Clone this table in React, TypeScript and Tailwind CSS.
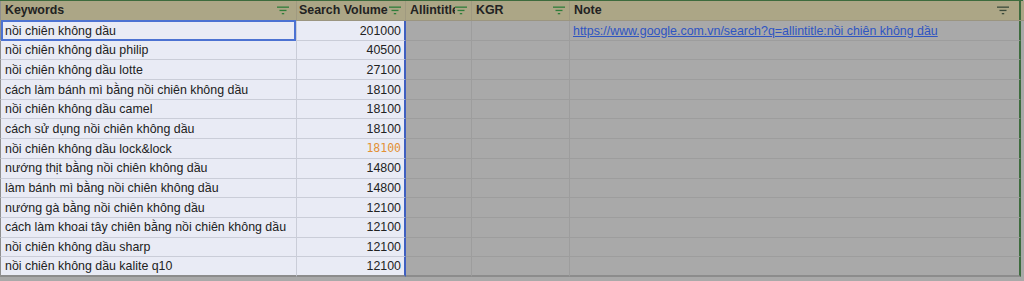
import React from "react";

const rows: [string, string, boolean?][] = [
  ["nồi chiên không dầu", "201000"],
  ["nồi chiên không dầu philip", "40500"],
  ["nồi chiên không dầu lotte", "27100"],
  ["cách làm bánh mì bằng nồi chiên không dầu", "18100"],
  ["nồi chiên không dầu camel", "18100"],
  ["cách sử dụng nồi chiên không dầu", "18100"],
  ["nồi chiên không dầu lock&lock", "18100", true],
  ["nướng thịt bằng nồi chiên không dầu", "14800"],
  ["làm bánh mì bằng nồi chiên không dầu", "14800"],
  ["nướng gà bằng nồi chiên không dầu", "12100"],
  ["cách làm khoai tây chiên bằng nồi chiên không dầu", "12100"],
  ["nồi chiên không dầu sharp", "12100"],
  ["nồi chiên không dầu kalite q10", "12100"],
];

function Filter({ dark }: { dark?: boolean }) {
  const c = dark ? "#3b4a3b" : "#2f7d3a";
  return (
    <svg width="12" height="9" viewBox="0 0 12 9" className="shrink-0">
      <rect x="0" y="0.5" width="12" height="1.3" fill={c} />
      <rect x="2.5" y="3.8" width="7" height="1.3" fill={c} />
      <rect x="4.8" y="7" width="2.4" height="1.3" fill={c} />
    </svg>
  );
}

export default function App() {
  return (
    <div
      className="w-[1024px] h-[281px] overflow-hidden bg-[#a9a9a9] text-[#222] flex flex-col"
      style={{ fontFamily: '"Liberation Sans", Arial, sans-serif' }}
    >
      <div className="h-[1px] bg-[#3d6b3d] shrink-0 w-[1023px]" />
      <div className="flex h-[20px] shrink-0 bg-[#aca686] border-b border-[#9b9580] text-[12.4px] font-bold whitespace-nowrap">
        <div className="w-[297px] flex items-center justify-between pl-[4px] pr-[7px] border-r border-[#a09a80] border-l border-l-[#8f8f8f]">
          <span>Keywords</span>
          <Filter />
        </div>
        <div className="w-[109px] flex items-center justify-between pl-[2px] pr-[4px] border-r border-[#a09a80]">
          <span>Search Volume</span>
          <Filter />
        </div>
        <div className="w-[66px] flex items-center justify-between pl-[4px] pr-[4px] border-r border-[#a09a80] overflow-hidden">
          <span className="overflow-hidden w-[46px]">Allintitle</span>
          <Filter />
        </div>
        <div className="w-[98px] flex items-center justify-between pl-[4px] pr-[4px] border-r border-[#a09a80]">
          <span>KGR</span>
          <Filter />
        </div>
        <div className="w-[451px] flex items-center justify-between pl-[4px] pr-[10px] border-r-2 border-[#3d6b3d]">
          <span>Note</span>
          <Filter dark />
        </div>
      </div>
      {rows.map(([kw, vol, orange], i) => {
        const last = i === rows.length - 1;
        const rb = last ? "border-b-2 border-b-[#8c8c8c]" : "border-b border-b-[#9d9d9d]";
        const rbBlue = last ? "border-b-2 border-b-[#8c8c8c]" : "border-b border-b-[#cacdd8]";
        return (
          <div key={i} className="flex h-[19.7px] shrink-0 text-[12.4px] whitespace-nowrap">
            <div
              className={`w-[297px] flex items-center pl-[4px] pt-[1px] bg-[#e9ebf5] border-l border-l-[#8f8f8f] border-r border-r-[#cacdd8] ${rbBlue} relative`}
            >
              {i === 0 && (
                <div className="absolute left-0 top-[-1px] right-0 bottom-[-1px] border-2 border-[#4c72d2]" />
              )}
              <span className="relative">{kw}</span>
            </div>
            <div
              className={`w-[109px] flex items-center justify-end pr-[3px] pt-[1px] bg-[#e9ebf5] border-r-2 border-r-[#3f5fc0] ${rbBlue} ${orange ? "text-[#e39236]" : ""}`}
              style={orange ? { fontFamily: '"DejaVu Sans Mono", monospace', fontSize: "11.5px" } : undefined}
            >
              {vol}
            </div>
            <div className={`w-[66px] border-r border-r-[#9d9d9d] ${rb}`} />
            <div className={`w-[98px] border-r border-r-[#9d9d9d] ${rb}`} />
            <div className={`w-[451px] flex items-center pl-[3px] pt-[1px] border-r-2 border-r-[#3d6b3d] ${rb}`}>
              {i === 0 && (
                <span className="text-[#2f55c2] underline">
                  https://www.google.com.vn/search?q=allintitle:nồi chiên không dầu
                </span>
              )}
            </div>
          </div>
        );
      })}
    </div>
  );
}
